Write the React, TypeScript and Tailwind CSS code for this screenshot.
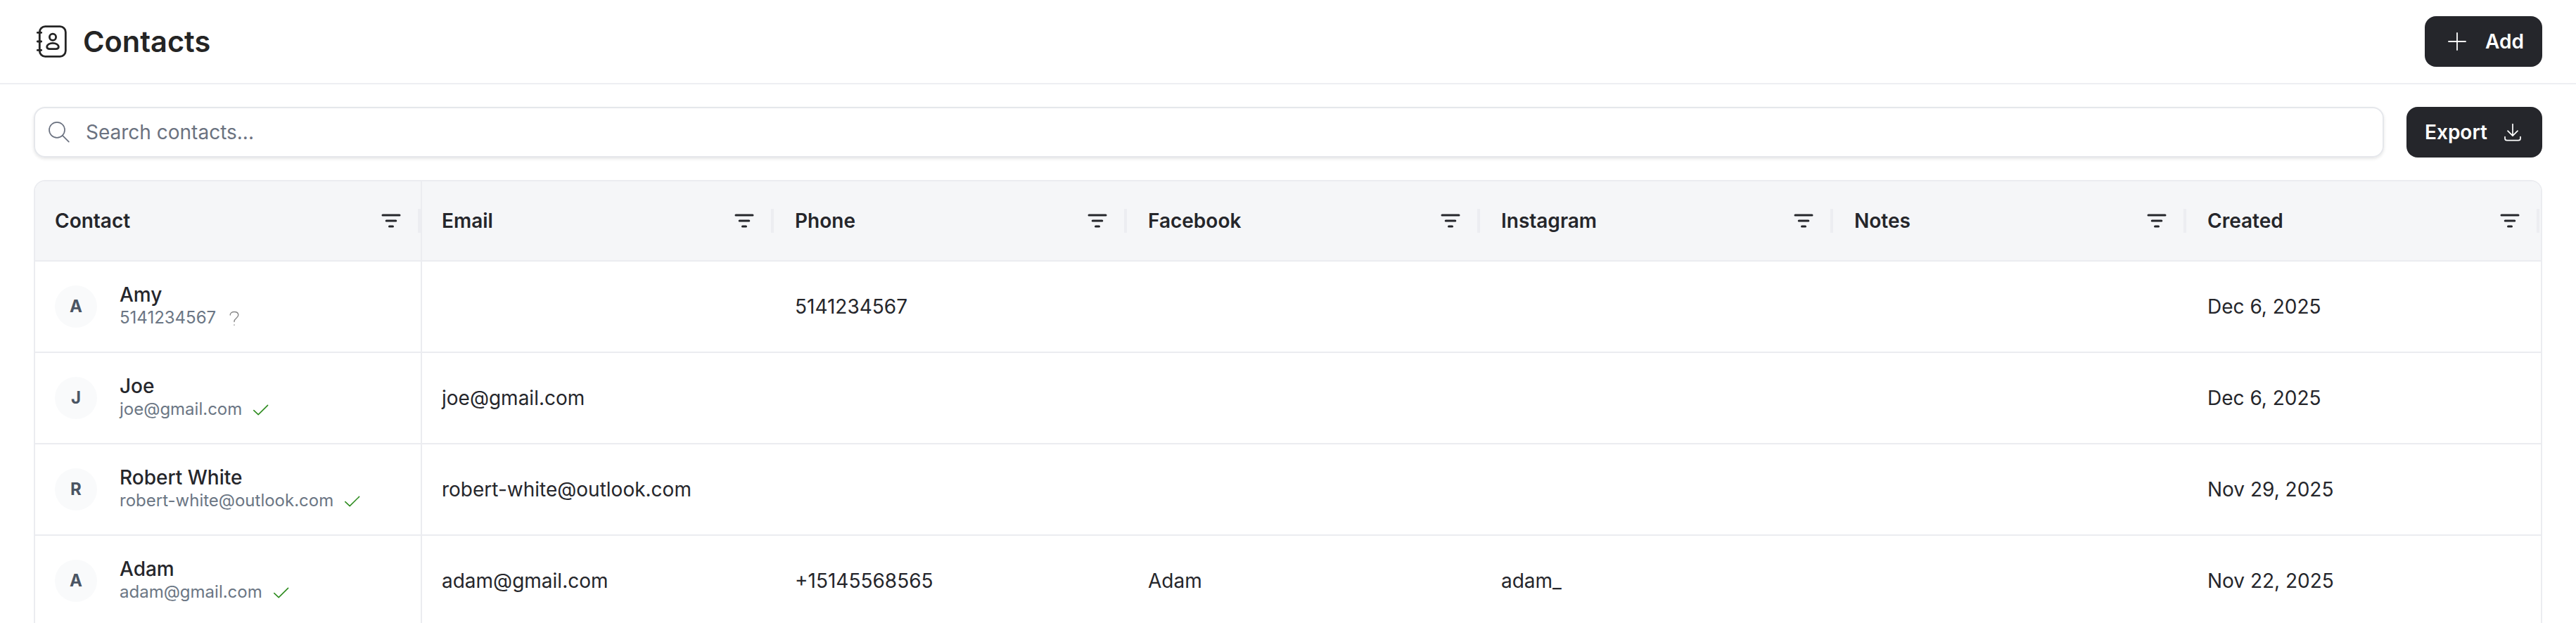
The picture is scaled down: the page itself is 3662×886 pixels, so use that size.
import type { ReactNode } from "react";
import clsx from "clsx";

type Contact = {
  name: string;
  handle: string;
  verified: boolean;
  email?: string;
  phone?: string;
  facebook?: string;
  instagram?: string;
  notes?: string;
  created: string;
};

const CONTACTS: Contact[] = [
  {
    name: "Amy",
    handle: "5141234567",
    verified: false,
    phone: "5141234567",
    created: "Dec 6, 2025",
  },
  {
    name: "Joe",
    handle: "joe@gmail.com",
    verified: true,
    email: "joe@gmail.com",
    created: "Dec 6, 2025",
  },
  {
    name: "Robert White",
    handle: "robert-white@outlook.com",
    verified: true,
    email: "robert-white@outlook.com",
    created: "Nov 29, 2025",
  },
  {
    name: "Adam",
    handle: "adam@gmail.com",
    verified: true,
    email: "adam@gmail.com",
    phone: "+15145568565",
    facebook: "Adam",
    instagram: "adam_",
    created: "Nov 22, 2025",
  },
];

const COLUMNS = [
  { key: "email", label: "Email" },
  { key: "phone", label: "Phone" },
  { key: "facebook", label: "Facebook" },
  { key: "instagram", label: "Instagram" },
  { key: "notes", label: "Notes" },
  { key: "created", label: "Created" },
] as const;

const GRID = "grid grid-cols-[550px_repeat(6,502px)]";

function Icon({
  className,
  viewBox,
  strokeWidth,
  children,
}: {
  className: string;
  viewBox: string;
  strokeWidth: number;
  children: ReactNode;
}) {
  return (
    <svg
      className={clsx("shrink-0", className)}
      viewBox={viewBox}
      fill="none"
      stroke="currentColor"
      strokeWidth={strokeWidth}
      strokeLinecap="round"
      strokeLinejoin="round"
      aria-hidden="true"
    >
      {children}
    </svg>
  );
}

function ContactsIcon() {
  return (
    <Icon
      className="h-12 w-12 text-[#242424]"
      viewBox="0 0 48 48"
      strokeWidth={2.8}
    >
      <rect x="8.3" y="2.7" width="37" height="42.6" rx="8" />
      <path d="M5.3 11.4h5.4M5.3 24h5.4M5.3 36.4h5.4" />
      <circle cx="27" cy="17.7" r="4.6" />
      <path d="M18.7 31.6c0-3 3.8-5.2 8.3-5.2s8.3 2.2 8.3 5.2c0 2-1.4 3-3.8 3h-9c-2.4 0-3.8-1-3.8-3z" />
    </Icon>
  );
}

function FilterIcon() {
  return (
    <Icon className="h-7 w-7" viewBox="0 0 28 28" strokeWidth={3}>
      <path d="M2 6h24M7.2 14h13.6M11.5 22h5" />
    </Icon>
  );
}

function HeaderCell({ label, pinned }: { label: string; pinned?: boolean }) {
  return (
    <div
      className={clsx(
        "flex items-center border-r-2 pl-7",
        pinned ? "border-[#ebecf0]" : "border-transparent",
      )}
    >
      <span className="grow font-semibold">{label}</span>
      <FilterIcon />
      <span className="ml-6 h-[34px] w-1 bg-[#ecedf1]" />
    </div>
  );
}

function ContactRow({ contact }: { contact: Contact }) {
  return (
    <div className={clsx(GRID, "h-[130px] border-b-2 border-[#ebecf0]")}>
      <div className="flex items-center border-r-2 border-[#ebecf0] pl-7">
        <div className="flex size-[60px] items-center justify-center rounded-full bg-[#f9fafb] text-[24px] font-bold text-[#4b5563]">
          {contact.name[0]}
        </div>
        <div className="ml-8 pb-0.5">
          <p className="text-[28px] leading-[34px] font-medium">
            {contact.name}
          </p>
          <p className="flex items-center text-[24px] leading-[32px] text-[#6b7684]">
            {contact.handle}
            {contact.verified ? (
              <Icon
                className="ml-3.5 h-6 w-6 text-[#2b8a1c]"
                viewBox="0 0 24 24"
                strokeWidth={1.5}
              >
                <path d="M2.8 13.6l6.4 6L22.6 6.4" />
              </Icon>
            ) : (
              <Icon
                className="ml-3.5 h-6 w-6 text-[#868686]"
                viewBox="0 0 24 24"
                strokeWidth={1.4}
              >
                <path d="M6.2 8c0-2.800 2.400-4.500 5.800-4.500s5.800 1.800 5.800 4.500c0 4.300-5.800 4.600-5.800 9v.5M12 22v.2" />
              </Icon>
            )}
          </p>
        </div>
      </div>
      {COLUMNS.map(({ key }) => (
        <div key={key} className="flex items-center pl-7">
          {contact[key]}
        </div>
      ))}
    </div>
  );
}

export default function App() {
  return (
    <div className="h-[886px] overflow-hidden bg-white font-['Inter',sans-serif] text-[28px] text-[#25262b]">
      <header className="flex h-[120px] items-center justify-between border-b-2 border-[#edeef2] px-12">
        <div className="flex items-center">
          <ContactsIcon />
          <h1 className="ml-[22px] pt-px text-[41.5px] font-semibold text-[#242424]">
            Contacts
          </h1>
        </div>
        <button className="flex h-[72px] w-[167px] items-center rounded-2xl bg-[#25262b] pl-8 font-semibold text-white">
          <Icon className="h-7 w-7" viewBox="0 0 28 28" strokeWidth={1.8}>
            <path d="M14 2v24M2 14h24" />
          </Icon>
          <span className="ml-[26px]">Add</span>
        </button>
      </header>

      <main className="px-12 pt-8">
        <div className="flex gap-8">
          <div className="flex h-[72px] grow items-center rounded-2xl border-2 border-[#e5e7eb] px-4 shadow-[0_2px_4px_rgba(0,0,0,0.1)]">
            <Icon
              className="h-9 w-9 text-[#6b7280]"
              viewBox="0 0 36 36"
              strokeWidth={1.7}
            >
              <circle cx="15" cy="14.8" r="11" />
              <path d="M22.8 22.6l9 9" />
            </Icon>
            <input
              className="ml-5 grow bg-transparent outline-none placeholder:text-[#6b7280]"
              placeholder="Search contacts..."
            />
          </div>
          <button className="flex h-[72px] w-[193px] items-center rounded-2xl bg-[#25262b] pl-[26px] font-semibold text-white">
            <span>Export</span>
            <Icon
              className="ml-[22px] h-7 w-7"
              viewBox="0 0 28 28"
              strokeWidth={1.7}
            >
              <path d="M14 2.6v16.2M7 12.2l7 7 7-7M3 20.5v2.2c0 2 1 3 3 3h16c2 0 3-1 3-3v-2.2" />
            </Icon>
          </button>
        </div>

        <div className="mt-8 overflow-hidden rounded-t-2xl border-2 border-b-0 border-[#ebecf0]">
          <div
            className={clsx(
              GRID,
              "h-[114px] border-b-2 border-[#ebecf0] bg-[#f5f6f8]",
            )}
          >
            <HeaderCell label="Contact" pinned />
            {COLUMNS.map(({ key, label }) => (
              <HeaderCell key={key} label={label} />
            ))}
          </div>
          {CONTACTS.map((contact) => (
            <ContactRow key={contact.name} contact={contact} />
          ))}
        </div>
      </main>
    </div>
  );
}
